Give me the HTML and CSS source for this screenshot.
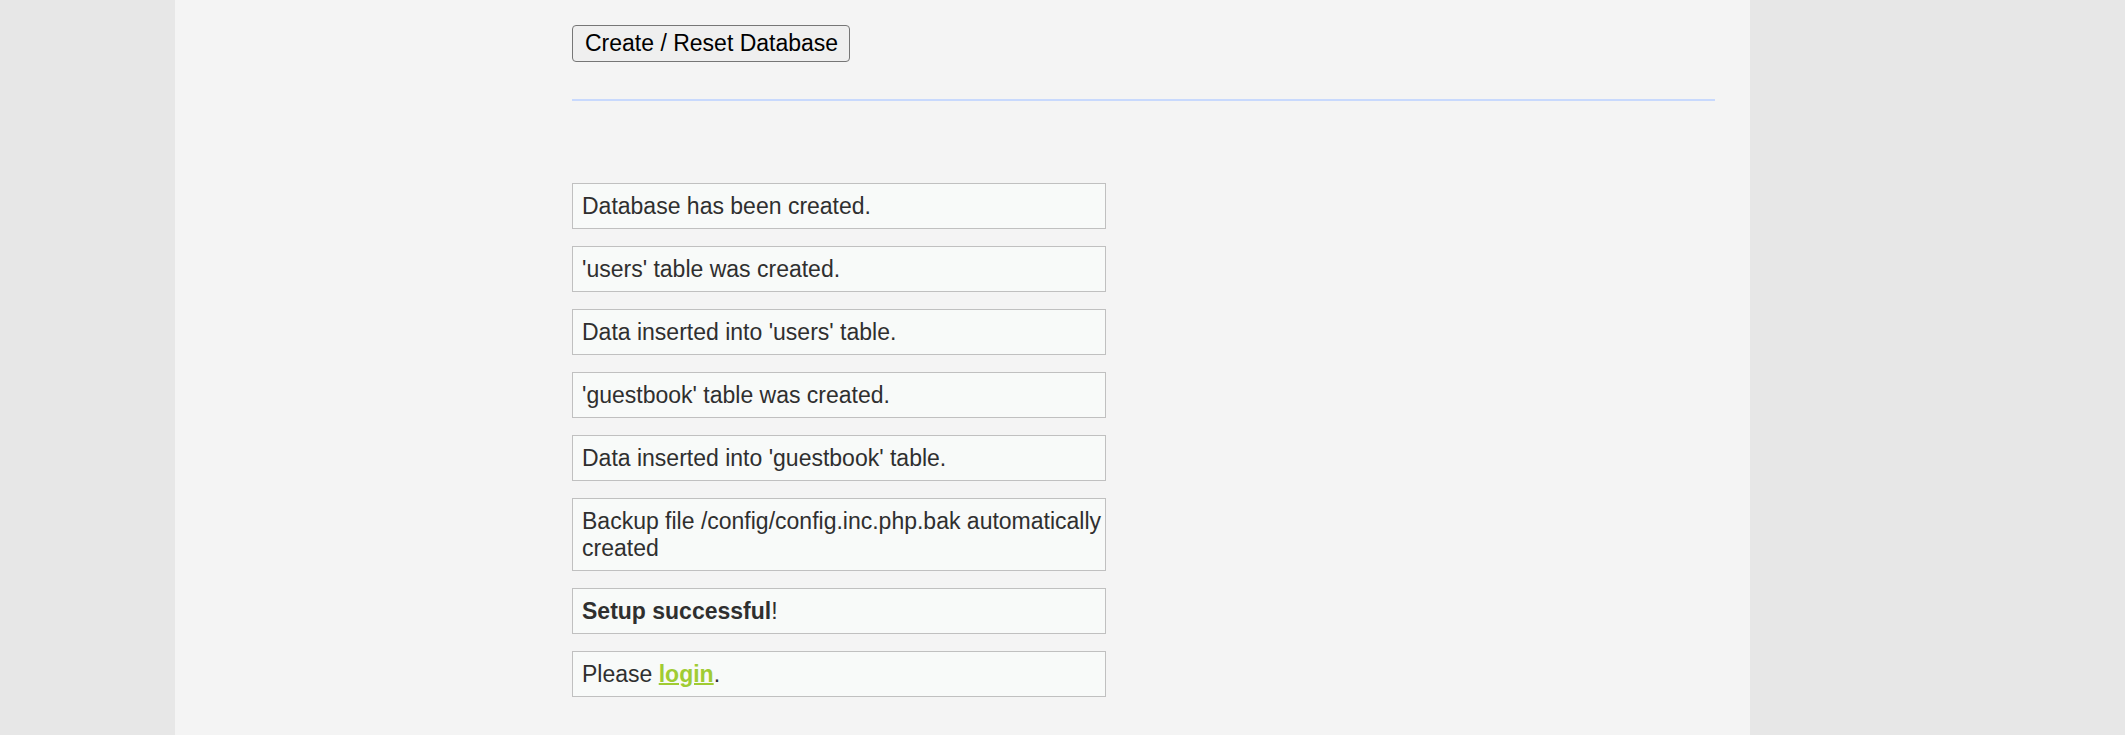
FILE: index.html
```
<!DOCTYPE html>
<html lang="en">
<head>
<meta charset="utf-8">
<meta name="viewport" content="width=device-width, initial-scale=1">
<title>Database Setup</title>
<link rel="stylesheet" href="styles.css">
</head>
<body>
<main class="page">
  <form class="setup">
    <button class="setup-button" type="button">Create / Reset Database</button>
  </form>
  <hr class="divider">
  <section class="messages">
    <div class="message">Database has been created.</div>
    <div class="message">'users' table was created.</div>
    <div class="message">Data inserted into 'users' table.</div>
    <div class="message">'guestbook' table was created.</div>
    <div class="message">Data inserted into 'guestbook' table.</div>
    <div class="message">Backup file /config/config.inc.php.bak automatically created</div>
    <div class="message"><strong>Setup successful</strong>!</div>
    <div class="message">Please <a class="login" href="#login">login</a>.</div>
  </section>
</main>
</body>
</html>
```

FILE: styles.css
```
* {
  box-sizing: border-box;
}

body {
  display: flex;
  min-height: 100vh;
  margin: 0;
  padding: 0 375px 0 175px;
  background: #e7e7e7;
  color: #2f2f2f;
  font-family: "Liberation Sans", Arial, sans-serif;
  font-size: 23px;
  line-height: 27px;
}

.page {
  flex: 1;
  padding: 25px 35px 38px 397px;
  background: #f4f4f4;
}

.setup {
  display: flex;
}

.setup-button {
  padding: 4px 11px 5px 12px;
  border: 1px solid #767676;
  border-radius: 4px;
  background: #efefef;
  color: #000;
  font: inherit;
  line-height: 26px;
}

.divider {
  height: 2px;
  margin: 37px 0 82px;
  border: 0;
  background: #c8d9fd;
}

.messages {
  display: flex;
  flex-direction: column;
  gap: 17px;
  max-width: 534px;
}

.message {
  padding: 9px 0 8px 9px;
  border: 1px solid #c0c0c0;
  background: #f8faf9;
}

.login {
  color: #a0cc33;
  font-weight: bold;
  text-decoration: underline 2px;
}
```
